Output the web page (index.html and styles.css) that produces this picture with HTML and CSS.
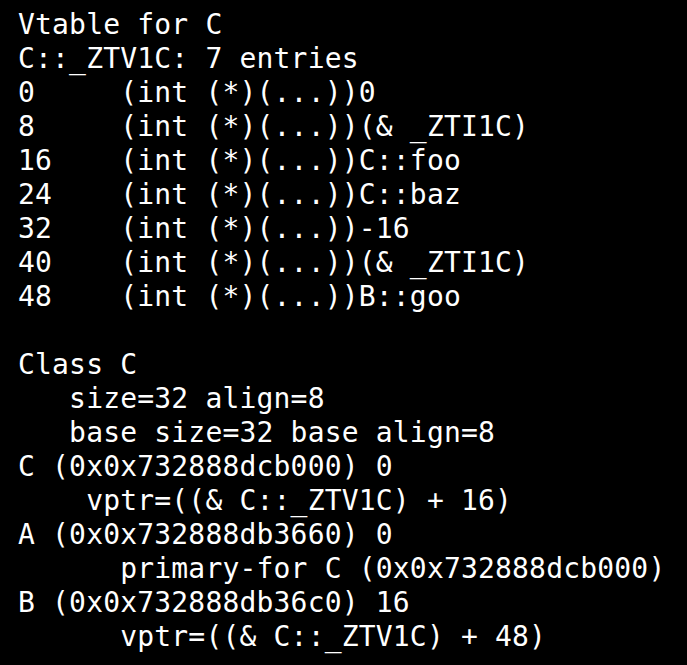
FILE: index.html
```html
<!DOCTYPE html>
<html>
<head>
<meta charset="utf-8">
<link rel="stylesheet" href="styles.css">
</head>
<body>
<pre class="term">Vtable for C
C::_ZTV1C: 7 entries
0     (int (*)(...))0
8     (int (*)(...))(&amp; _ZTI1C)
16    (int (*)(...))C::foo
24    (int (*)(...))C::baz
32    (int (*)(...))-16
40    (int (*)(...))(&amp; _ZTI1C)
48    (int (*)(...))B::goo

Class C
   size=32 align=8
   base size=32 base align=8
C (0x0x732888dcb000) 0
    vptr=((&amp; C::_ZTV1C) + 16)
A (0x0x732888db3660) 0
      primary-for C (0x0x732888dcb000)
B (0x0x732888db36c0) 16
      vptr=((&amp; C::_ZTV1C) + 48)</pre>
</body>
</html>
```
FILE: styles.css
```css
html, body {
  margin: 0;
  padding: 0;
  background: #000;
  width: 687px;
  height: 665px;
  overflow: hidden;
}
.term {
  margin: 0;
  padding: 8px 0 0 18px;
  font-family: "DejaVu Sans Mono", "Liberation Mono", monospace;
  font-size: 28px;
  line-height: 34px;
  letter-spacing: 0.18px;
  color: #fff;
  white-space: pre;
}
```
